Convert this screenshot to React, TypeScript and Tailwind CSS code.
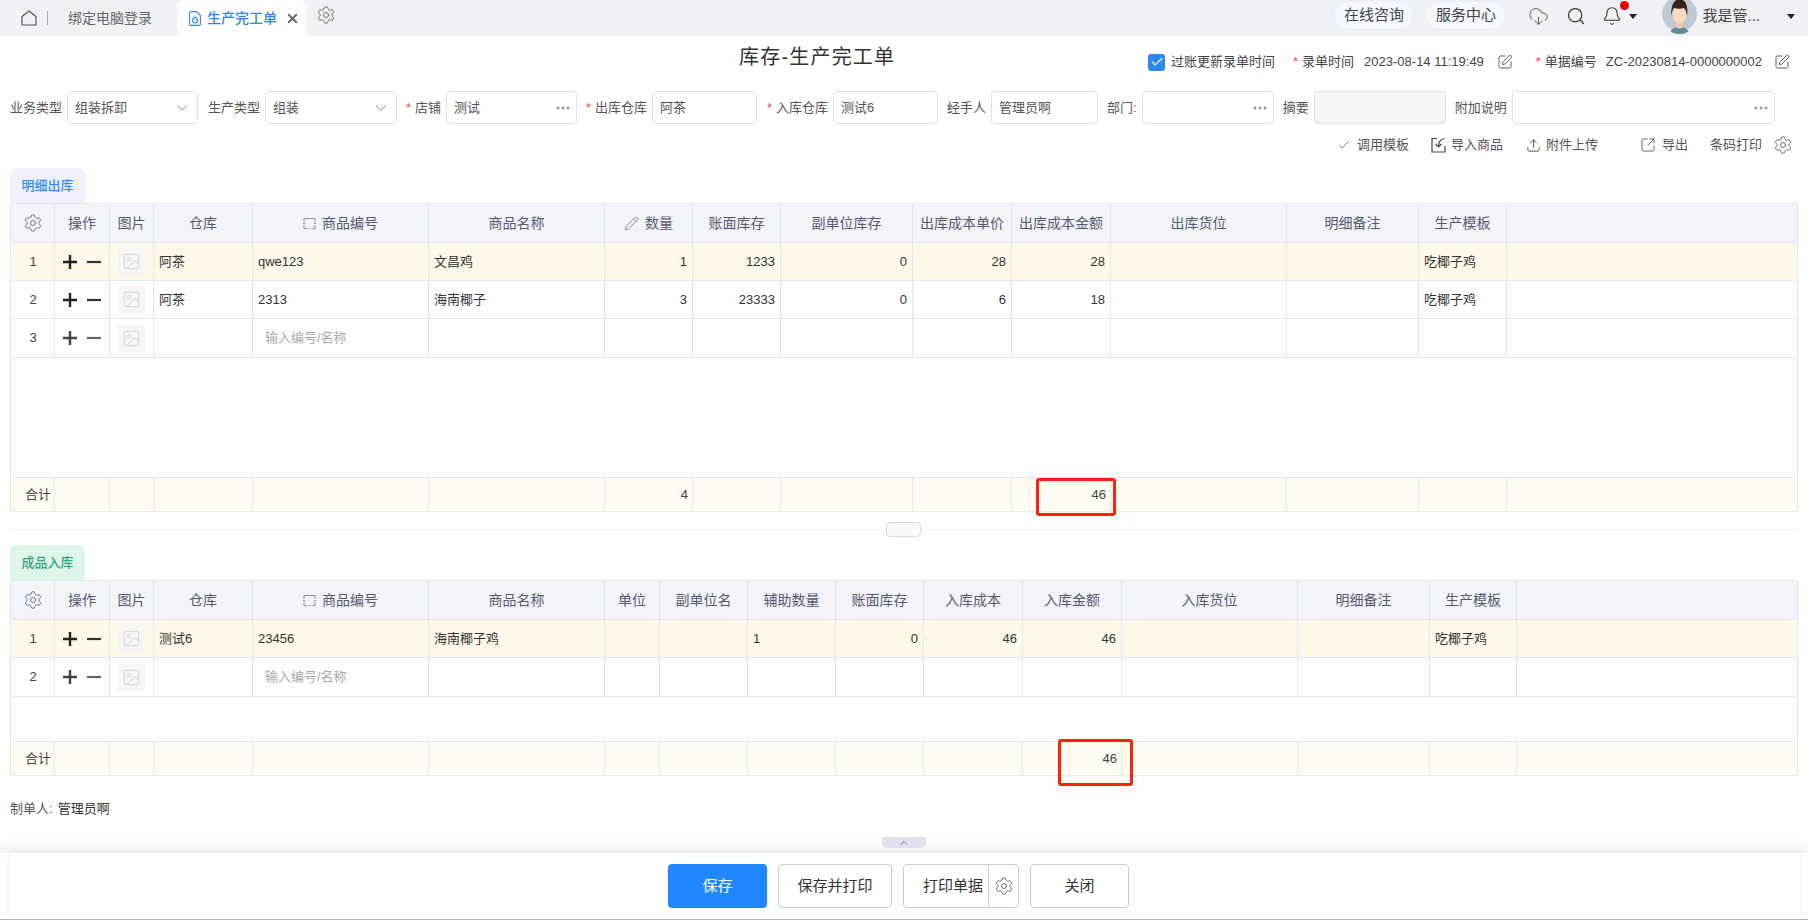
import { Bell, Check, ChevronDown, ChevronUp, CloudDownload, Image, Pencil, Search, Settings, SquareArrowOutUpRight, SquarePen, Upload, X } from 'lucide-react';

const grid1 = 'grid grid-cols-[44px_55px_44px_99px_176px_176px_88px_88px_132px_99px_99px_176px_132px_88px_1fr]';
const grid2 = 'grid grid-cols-[44px_55px_44px_99px_176px_176px_55px_88px_88px_88px_99px_99px_176px_132px_87px_1fr]';

const cellBorder = 'border-r border-b border-[#e4e6ef]';

function OpIcon({ dim }: { dim?: boolean }) {
  return (
    <div className="flex items-center gap-[10px] pl-[8px]">
      <svg width="14" height="14" viewBox="0 0 14 14" className={dim ? 'text-[#444]' : 'text-[#222]'}>
        <path d="M7 0v14M0 7h14" stroke="currentColor" strokeWidth="2.4" />
      </svg>
      <svg width="14" height="14" viewBox="0 0 14 14" className={dim ? 'text-[#666]' : 'text-[#333]'}>
        <path d="M0 7h14" stroke="currentColor" strokeWidth="2.2" />
      </svg>
    </div>
  );
}

function Thumb() {
  return (
    <div className="ml-[8px] flex h-[27px] w-[27px] items-center justify-center bg-[#f6f6f6]">
      <Image size={19} strokeWidth={1.5} className="text-[#dcdcdc]" />
    </div>
  );
}

function ScanIcon() {
  return (
    <svg width="13" height="13" viewBox="0 0 13 13" fill="none" stroke="#8a8d9c" strokeWidth="1">
      <path d="M1 5V1.5h11V5" />
      <path d="M1 8v3.500h3M6 11.500h1.500M9.500 11.500H12V8" />
      <path d="M0 6.500h2M11 6.500h2" />
    </svg>
  );
}

function HeaderCell({ text }: { text: string }) {
  let icon = null;
  if (text === '商品编号') icon = <ScanIcon />;
  if (text === '数量') icon = <Pencil size={15} strokeWidth={1.2} className="text-[#6a6d80]" />;
  return (
    <div className={`${cellBorder} flex items-center justify-center gap-[6px] text-[14px] text-[#555a70]`}>
      {icon}
      <span>{text}</span>
    </div>
  );
}

type Row = { no: number; dim?: boolean; hi?: boolean; cells: (string | { r: string } | { ph: string })[] };

function DataRow({ row, grid, h }: { row: Row; grid: string; h: string }) {
  return (
    <div className={`${grid} ${h} ${row.hi ? 'bg-[#fef9e8]' : 'bg-white'} text-[13px] text-[#333]`}>
      <div className={`${cellBorder} flex items-center justify-center pl-[1px] text-[#444]`}>{row.no}</div>
      <div className={`${cellBorder} flex items-center`}><OpIcon dim={row.dim} /></div>
      <div className={`${cellBorder} flex items-center`}><Thumb /></div>
      {row.cells.map((c, i) => {
        if (typeof c === 'string') {
          return <div key={i} className={`${cellBorder} flex items-center px-[5px]`}>{c}</div>;
        }
        if ('r' in c) {
          return <div key={i} className={`${cellBorder} flex items-center justify-end px-[5px]`}>{c.r}</div>;
        }
        return <div key={i} className={`${cellBorder} flex items-center pl-[12px] text-[#aaa]`}>{c.ph}</div>;
      })}
    </div>
  );
}

function TotalRow({ grid, cells }: { grid: string; cells: string[] }) {
  return (
    <div className={`${grid} h-[35px] border-t border-[#e4e6ef] bg-[#fefbf3] text-[13px] text-[#444]`}>
      {cells.map((c, i) => (
        <div key={i} className={`flex items-center border-r border-b border-[#e8e8e8] ${i === 0 ? 'justify-end pr-[3px]' : 'justify-end pr-[4px]'}`}>{c}</div>
      ))}
    </div>
  );
}

function Field({ label, star, value, w, kind, className }: { label: string; star?: boolean; value?: string; w: string; kind?: 'select' | 'more' | 'off'; className?: string }) {
  return (
    <div className={`flex items-center gap-[5px] ${className ?? ''}`}>
      <div className="flex items-center text-[13px] text-[#555]">
        {star && <span className="w-[9px] text-[#f5483b]">*</span>}
        <span>{label}</span>
      </div>
      <div className={`${w} flex h-[33px] items-center justify-between rounded-[4px] border border-[#e2e2e2] pr-[6px] pl-[7px] text-[13px] text-[#555] ${kind === 'off' ? 'bg-[#f5f5f5]' : 'bg-white'}`}>
        <span>{value}</span>
        {kind === 'select' && <ChevronDown size={18} strokeWidth={1} className="text-[#666]" />}
        {kind === 'more' && (
          <svg width="14" height="4" viewBox="0 0 14 4" fill="#999">
            <circle cx="2" cy="2" r="1.500" /><circle cx="7" cy="2" r="1.500" /><circle cx="12" cy="2" r="1.500" />
          </svg>
        )}
      </div>
    </div>
  );
}

function Avatar() {
  return (
    <div className="h-[35px] w-[35px] overflow-hidden rounded-b-full">
      <svg width="35" height="35" viewBox="0 0 35 35">
        <circle cx="17.500" cy="15" r="17.500" fill="#bfc9d6" />
        <path d="M7 36c1-6 6-8 10.500-8s9.500 2 10.500 8z" fill="#5f8a96" />
        <path d="M14 22h7v6c-2 2-5 2-7 0z" fill="#efc9ae" />
        <ellipse cx="17.500" cy="15" rx="7" ry="10" fill="#f6d8c0" />
        <path d="M9.500 17c-1-9 2-17 8-17s9 7 7.500 17c-.5-4-1.500-6-3-8-3 1-7 1-10 0-1.500 2-2 4-2.500 8z" fill="#33241d" />
      </svg>
    </div>
  );
}

function Caret() {
  return <div className="h-0 w-0 border-x-[4px] border-t-[5px] border-x-transparent border-t-[#222]" />;
}

function ImportIcon() {
  return (
    <svg width="15" height="16" viewBox="0 0 15 16" fill="none" stroke="#444" strokeWidth="1.200">
      <path d="M6 1.500H1v13.500h13V9" />
      <path d="M13.500 1.500C10 2 7.500 5 7.500 9.500" />
      <path d="M4.500 7l3 3 3-3" />
    </svg>
  );
}

function Section({ title, tabClass, grid, heads, rows, gap, totals }: {
  title: string; tabClass: string; grid: string; heads: string[]; rows: Row[]; gap: string; totals: string[];
}) {
  return (
    <div className="mx-[10px] w-[1788px]">
      <div className={`flex h-[35px] w-[75px] items-center justify-center rounded-t-[6px] text-[13px] font-medium ${tabClass}`}>{title}</div>
      <div className="border-t border-l border-[#e4e6ef]">
        <div className={`${grid} h-[39px] bg-[#f2f4fa]`}>
          <div className={`${cellBorder} flex items-center justify-center`}>
            <Settings size={20} strokeWidth={1} className="text-[#5c5f70]" />
          </div>
          {heads.map((h, i) => <HeaderCell key={i} text={h} />)}
          <div className={cellBorder} />
        </div>
        {rows.map((r, i) => (
          <DataRow key={i} row={r} grid={grid} h={i === rows.length - 1 ? 'h-[39px]' : 'h-[38px]'} />
        ))}
        <div className={`${gap} border-r border-[#e4e6ef]`} />
        <TotalRow grid={grid} cells={totals} />
      </div>
    </div>
  );
}

const head1 = ['操作', '图片', '仓库', '商品编号', '商品名称', '数量', '账面库存', '副单位库存', '出库成本单价', '出库成本金额', '出库货位', '明细备注', '生产模板'];
const head2 = ['操作', '图片', '仓库', '商品编号', '商品名称', '单位', '副单位名', '辅助数量', '账面库存', '入库成本', '入库金额', '入库货位', '明细备注', '生产模板'];

const rows1: Row[] = [
  { no: 1, hi: true, cells: ['阿茶', 'qwe123', '文昌鸡', { r: '1' }, { r: '1233' }, { r: '0' }, { r: '28' }, { r: '28' }, '', '', '吃椰子鸡', ''] },
  { no: 2, cells: ['阿茶', '2313', '海南椰子', { r: '3' }, { r: '23333' }, { r: '0' }, { r: '6' }, { r: '18' }, '', '', '吃椰子鸡', ''] },
  { no: 3, dim: true, cells: ['', { ph: '输入编号/名称' }, '', '', '', '', '', '', '', '', '', ''] },
];

const rows2: Row[] = [
  { no: 1, hi: true, cells: ['测试6', '23456', '海南椰子鸡', '', '', '1', { r: '0' }, { r: '46' }, { r: '46' }, '', '', '吃椰子鸡', ''] },
  { no: 2, dim: true, cells: ['', { ph: '输入编号/名称' }, '', '', '', '', '', '', '', '', '', '', ''] },
];

const total1 = ['合计', '', '', '', '', '', '4', '', '', '', '46', '', '', '', ''];
const total2 = ['合计', '', '', '', '', '', '', '', '', '', '', '46', '', '', '', ''];

export default function App() {
  return (
    <div className="relative flex h-[920px] w-[1808px] flex-col overflow-hidden bg-white [font-family:'Liberation_Sans','Noto_Sans_CJK_SC',sans-serif]">
      {/* tab bar */}
      <div className="flex h-[36px] shrink-0 items-center bg-[#f0f1f5]">
        <svg width="16" height="16" viewBox="0 0 16 16" fill="none" stroke="#555" strokeWidth="1.200" className="ml-[21px]">
          <path d="M1 6.500 8 1l7 5.500V15H1z" strokeLinejoin="round" />
        </svg>
        <div className="ml-[10px] h-[14px] w-px bg-[#aaa]" />
        <span className="ml-[20px] text-[14px] text-[#666]">绑定电脑登录</span>
        <div className="ml-[25px] flex h-[36px] w-[130px] items-center rounded-t-[8px] bg-white pl-[12px]">
          <svg width="12" height="15" viewBox="0 0 12 15" fill="none" stroke="#2d85f0" strokeWidth="1.100">
            <path d="M7.500.6H1.800A1.200 1.200 0 0 0 .6 1.800v11.400a1.200 1.200 0 0 0 1.200 1.200h8.400a1.200 1.200 0 0 0 1.200-1.200V4.500z" />
            <path d="M6 6c1.800 1.500 2.500 2.500 2.500 3.500a2.500 2.500 0 0 1-5 0C3.500 8.500 4.200 7.500 6 6z" />
          </svg>
          <span className="ml-[6px] text-[14px] font-medium text-[#2b85f5]">生产完工单</span>
          <X size={15} strokeWidth={3} className="ml-[8px] text-[#666]" />
        </div>
        <Settings size={20} strokeWidth={1} className="mb-[6px] ml-[9px] text-[#555]" />

        <div className="ml-auto flex items-center pr-[13px]">
          <div className="mb-[6px] flex h-[29px] w-[81px] items-center justify-center rounded-full border border-[#e8edf8] bg-[#f4f7fe] text-[15px] text-[#444]">在线咨询</div>
          <div className="mb-[6px] ml-[11px] flex h-[29px] w-[81px] items-center justify-center rounded-full border border-[#e8edf8] bg-[#f4f7fe] text-[15px] text-[#444]">服务中心</div>
          <CloudDownload size={21} strokeWidth={1} className="mb-[3px] ml-[22px] text-[#444]" />
          <Search size={20} strokeWidth={1.500} className="mb-[5px] ml-[17px] text-[#333]" />
          <div className="relative mb-[5px] ml-[16px]">
            <Bell size={20} strokeWidth={1.300} className="text-[#333]" />
            <div className="absolute top-[-5px] left-[18px] h-[9px] w-[9px] rounded-full bg-[#f00000]" />
          </div>
          <div className="mb-[4px] ml-[7px]"><Caret /></div>
          <div className="mb-[4px] ml-[25px]"><Avatar /></div>
          <span className="mb-[4px] ml-[5px] text-[15px] text-[#444]">我是管...</span>
          <div className="mb-[4px] ml-[27px]"><Caret /></div>
        </div>
      </div>

      {/* title and meta */}
      <div className="flex h-[55px] shrink-0 items-start">
        <div className="mt-[9px] ml-[739px] text-[20px] leading-[24px] tracking-[1.200px] text-[#333]">库存-生产完工单</div>
        <div className="mt-[17px] ml-auto flex h-[18px] items-center pr-[18px] text-[13px] text-[#444]">
          <div className="flex h-[17px] w-[17px] items-center justify-center rounded-[3px] bg-[#2b87f5]">
            <Check size={14} strokeWidth={2} className="text-white" />
          </div>
          <span className="ml-[6px]">过账更新录单时间</span>
          <span className="ml-[18px] w-[9px] text-[#f5483b]">*</span>
          <span>录单时间</span>
          <span className="ml-[10px]">2023-08-14 11:19:49</span>
          <SquarePen size={16} strokeWidth={1.300} className="ml-[13px] text-[#444]" />
          <span className="ml-[23px] w-[9px] text-[#f5483b]">*</span>
          <span>单据编号</span>
          <span className="ml-[9px]">ZC-20230814-0000000002</span>
          <SquarePen size={16} strokeWidth={1.300} className="ml-[12px] text-[#444]" />
        </div>
      </div>

      {/* form */}
      <div className="flex h-[33px] shrink-0 items-center gap-[9px] pl-[10px]">
        <Field label="业务类型" value="组装拆卸" w="w-[131px]" kind="select" />
        <Field label="生产类型" value="组装" w="w-[132px]" kind="select" className="ml-[1px]" />
        <Field label="店铺" star value="测试" w="w-[131px]" kind="more" />
        <Field label="出库仓库" star value="阿茶" w="w-[105px]" />
        <Field label="入库仓库" star value="测试6" w="w-[105px]" className="ml-[1px]" />
        <Field label="经手人" value="管理员啊" w="w-[107px]" />
        <Field label="部门:" w="w-[132px]" kind="more" />
        <Field label="摘要" w="w-[132px]" kind="off" />
        <Field label="附加说明" w="w-[263px]" kind="more" />
      </div>

      {/* toolbar */}
      <div className="mb-[2px] flex h-[42px] shrink-0 items-center justify-end pr-[15px] text-[13px] text-[#555]">
        <Check size={14} strokeWidth={1.100} className="text-[#333]" />
        <span className="ml-[6px]">调用模板</span>
        <div className="ml-[22px]"><ImportIcon /></div>
        <span className="ml-[5px]">导入商品</span>
        <Upload size={15} strokeWidth={1.300} className="ml-[23px] text-[#333]" />
        <span className="ml-[5px]">附件上传</span>
        <SquareArrowOutUpRight size={16} strokeWidth={1.200} className="ml-[42px] text-[#444]" />
        <span className="ml-[6px]">导出</span>
        <span className="ml-[22px]">条码打印</span>
        <Settings size={20} strokeWidth={1} className="ml-[11px]" />
      </div>

      <Section
        title="明细出库"
        tabClass="bg-[#f0f0ff] text-[#2f8cf5]"
        grid={grid1}
        heads={head1}
        rows={rows1}
        gap="h-[119px]"
        totals={total1}
      />

      {/* splitter */}
      <div className="relative mx-[10px] h-[33px] w-[1788px] shrink-0">
        <div className="mt-[17px] h-px bg-[#eeeef0]" />
        <div className="absolute top-[10px] left-[876px] h-[15px] w-[35px] rounded-[4px] border border-[#dcdcdc] bg-[#fafafa]" />
      </div>

      <Section
        title="成品入库"
        tabClass="bg-[#dff5e9] text-[#2fa67a]"
        grid={grid2}
        heads={head2}
        rows={rows2}
        gap="h-[44px]"
        totals={total2}
      />

      <div className="flex h-[61px] shrink-0 items-center pt-[5px] pl-[10px] text-[13px]">
        <span className="text-[#555]">制单人:</span>
        <span className="ml-[5px] text-[#333]">管理员啊</span>
      </div>

      {/* bottom action bar */}
      <div className="relative mx-[10px] h-px w-[1788px] shrink-0 bg-[#eeeef0]">
        <div className="absolute top-0 left-[872px] z-10 flex h-[11px] w-[44px] items-center justify-center rounded-b-[5px] bg-[#dfe2ec]">
          <ChevronUp size={12} strokeWidth={2} className="text-[#777]" />
        </div>
      </div>
      <div className="h-[15px] shrink-0 bg-gradient-to-b from-white to-[#f1f1f3]" />
      <div className="mx-[10px] flex h-[66px] w-[1790px] shrink-0 items-start justify-center bg-white pt-[11px] pr-[13px] text-[15px] text-[#333] shadow-[0_0_6px_rgba(0,0,0,0.08)]">
        <div className="flex h-[44px] w-[99px] items-center justify-center rounded-[4px] bg-[#2187ff] text-white">保存</div>
        <div className="ml-[11px] flex h-[44px] w-[114px] items-center justify-center rounded-[4px] border border-[#ccc]">保存并打印</div>
        <div className="ml-[11px] flex h-[44px] w-[116px] items-center rounded-[4px] border border-[#ccc]">
          <div className="flex h-full w-[85px] items-center justify-end border-r border-[#ccc] pr-[5px]">打印单据</div>
          <div className="flex flex-1 items-center justify-center"><Settings size={20} strokeWidth={1} className="text-[#555]" /></div>
        </div>
        <div className="ml-[11px] flex h-[44px] w-[99px] items-center justify-center rounded-[4px] border border-[#ccc]">关闭</div>
      </div>
      <div className="absolute right-0 bottom-0 left-0 h-px bg-[#b5b0a8]" />

      {/* red annotation boxes from the screenshot */}
      <div className="absolute top-[478px] left-[1036px] h-[38px] w-[80px] rounded-[3px] border-[3px] border-[#ff2010]" />
      <div className="absolute top-[739px] left-[1058px] h-[47px] w-[75px] rounded-[3px] border-[3px] border-[#ff2010]" />
    </div>
  );
}
